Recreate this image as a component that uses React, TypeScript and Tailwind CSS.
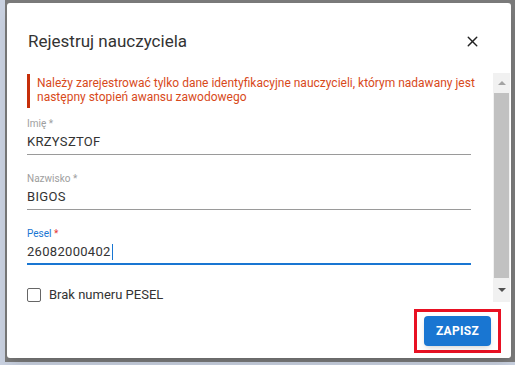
import { X } from "lucide-react";

function Field({ label, value, active }: { label: string; value: string; active?: boolean }) {
  return (
    <div className="mr-[22px]">
      <div className={`text-[10px] leading-[12px] ${active ? "text-[#1976d2]" : "text-[#9e9e9e]"}`}>
        {label} <span className={active ? "text-[#e53935]" : ""}>*</span>
      </div>
      <div className="mt-[3px] flex h-[18px] items-center text-[13px] tracking-[0.3px] text-[#333]">
        {value}
        {active && <span className="ml-[1px] h-[16px] w-px bg-[#1976d2]" />}
      </div>
      <div className={active ? "mt-[2px] h-[2px] bg-[#1976d2]" : "mt-[3px] h-px bg-[#9a9a9a]"} />
    </div>
  );
}

export default function App() {
  return (
    <div className="h-[365px] w-[515px] overflow-hidden bg-[#c9d1e0] font-['Roboto',sans-serif]">
      <div className="ml-[5px] h-[362px] w-[510px] bg-[#7a7a7a] pl-[2px] pt-[3px]">
        <div className="flex h-[355px] w-[504px] flex-col rounded-[3px] bg-white shadow-lg">
          <div className="flex items-center justify-between pl-[21px] pr-[30px] pt-[27px]">
            <h2 className="text-[17px] leading-[22px] text-[#333]">Rejestruj nauczyciela</h2>
            <X className="h-[17px] w-[17px] text-[#222]" strokeWidth={2} />
          </div>
          <div className="mt-[21px] flex h-[229px] pl-[20px] pr-[1px]">
            <div className="flex-1 pt-[1px]">
              <div className="h-[34px] border-l-[3px] border-[#c62f0a] pl-[7px] pt-[2px] text-[12px] leading-[14px] text-[#d84a1b]">
                Należy zarejestrować tylko dane identyfikacyjne nauczycieli, którym nadawany jest następny stopień awansu zawodowego
              </div>
              <div className="mt-[10px] flex flex-col gap-[18px]">
                <Field label="Imię" value="KRZYSZTOF" />
                <Field label="Nazwisko" value="BIGOS" />
                <Field label="Pesel" value="26082000402" active />
              </div>
              <label className="mt-[20px] flex items-center gap-[8px]">
                <span className="h-[14px] w-[14px] rounded-[2px] border border-[#666] bg-white" />
                <span className="text-[13px] text-[#333]">Brak numeru PESEL</span>
              </label>
            </div>
            <div className="flex w-[17px] flex-col items-center bg-[#f1f1f1]">
              <div className="flex h-[20px] items-center">
                <span className="h-0 w-0 border-x-[4px] border-b-[4px] border-x-transparent border-b-[#a3a3a3]" />
              </div>
              <div className="w-[15px] flex-1 bg-[#c1c1c1]" />
              <div className="flex h-[24px] items-center">
                <span className="h-0 w-0 border-x-[4px] border-t-[4px] border-x-transparent border-t-[#505050]" />
              </div>
            </div>
          </div>
          <div className="flex justify-end pr-[10px] pt-[7px]">
            <div className="border-[3px] border-[#e81123] px-[7px] py-[4px]">
              <button className="h-[30px] w-[67px] rounded-[4px] bg-[#1976d2] text-[12px] font-bold tracking-[0.3px] text-white shadow-md">
                ZAPISZ
              </button>
            </div>
          </div>
        </div>
      </div>
    </div>
  );
}
